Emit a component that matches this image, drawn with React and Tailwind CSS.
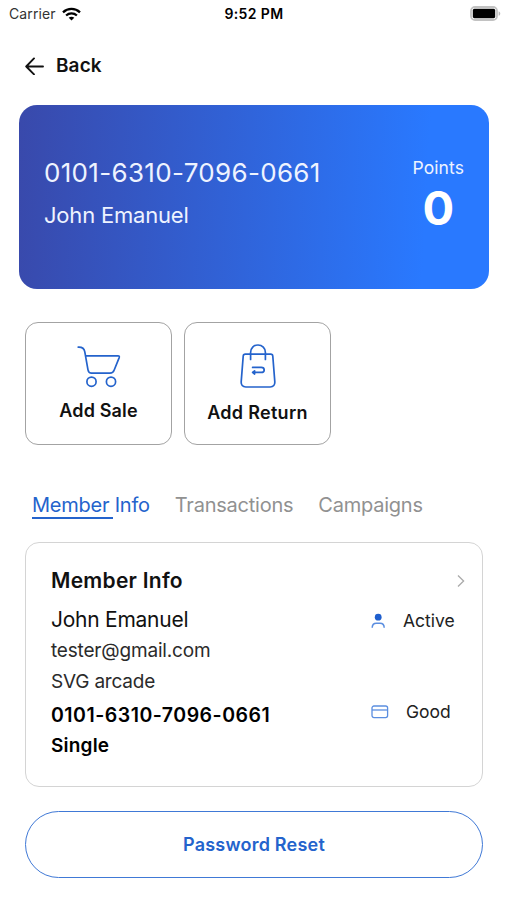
import { useState } from 'react';

const TABS = [
  { id: 'info', label: 'Member Info' },
  { id: 'transactions', label: 'Transactions' },
  { id: 'campaigns', label: 'Campaigns' },
];

const WifiIcon = () => (
  <svg width="19" height="14" viewBox="0 0 19 14" fill="none" stroke="#000" strokeWidth="2.3">
    <path d="M1 5.3C5.8 0.7 13.2 0.7 18 5.3" />
    <path d="M4.1 8.5C7.2 5.6 11.8 5.6 14.9 8.5" />
    <path d="M9.5 13.4L6.7 10.7C8.3 9.3 10.7 9.3 12.3 10.7Z" fill="#000" stroke="none" />
  </svg>
);

const BatteryIcon = () => (
  <svg width="31" height="15" viewBox="0 0 31 15">
    <rect x="1" y="1" width="26" height="13" rx="4" fill="#fff" stroke="#c2c2c2" strokeWidth="1.8" />
    <rect x="2.8" y="2.8" width="22.4" height="9.4" rx="1.6" fill="#000" />
    <path d="M28.6 5.2C30.8 6 30.8 9 28.6 9.8Z" fill="#b9b9b9" />
  </svg>
);

const CartIcon = () => (
  <svg width="44" height="42" viewBox="0 0 44 42" fill="none" stroke="#2463cc" strokeWidth="1.7" strokeLinecap="round" strokeLinejoin="round">
    <path d="M1.2 1.2C5 1 7.2 2.4 7.8 5.8L11 23.8C11.4 26 12.4 27.2 14.6 27.2H33C35.2 27.2 36.4 26.2 37.2 24L42.2 11.6C42.6 10.4 42.2 9.8 41 9.8H8.6" />
    <circle cx="14.5" cy="35.7" r="4.6" />
    <circle cx="34" cy="35.7" r="4.6" />
  </svg>
);

const ReturnBagIcon = () => (
  <svg width="36" height="44" viewBox="0 0 36 44" fill="none" stroke="#2463cc" strokeWidth="1.7" strokeLinecap="round" strokeLinejoin="round">
    <path d="M5.3 10.2H30.7C32 10.2 32.7 10.9 32.8 12.2L34.8 37.6C35 41 33.4 43 30.2 43H5.8C2.6 43 1 41 1.2 37.6L3.2 12.2C3.3 10.9 4 10.2 5.3 10.2Z" />
    <path d="M10.6 15.4V8.4C10.6 4.2 13.8 1 18 1S25.4 4.2 25.4 8.4V15.4" />
    <path d="M12.6 23.4H21.2C23 23.4 24.2 24.4 24.2 25.9S23 28.4 21.2 28.4H13.4" />
    <path d="M14.6 26.8L12.6 28.4L14.6 30Z" fill="#2463cc" />
  </svg>
);

export default function App() {
  const [activeTab, setActiveTab] = useState('info');

  return (
    <div className="h-[900px] w-[507px] overflow-hidden bg-white text-[#111] font-['Inter','Liberation_Sans',sans-serif]">
      {/* Status bar */}
      <div className="grid h-[27px] grid-cols-3 items-center pl-[9px] pr-[6px] text-[14px]">
        <div className="flex items-center gap-[6px] text-[#333]">
          <span className="tracking-[0.1px]">Carrier</span>
          <WifiIcon />
        </div>
        <span className="-ml-[2px] text-center font-semibold tracking-[0.4px] text-black">9:52 PM</span>
        <div className="flex justify-end">
          <BatteryIcon />
        </div>
      </div>

      {/* Header */}
      <button className="mt-[25px] ml-[25px] flex h-7 items-center gap-3 text-[19px] font-semibold tracking-[0.1px]">
        <svg width="19" height="18" viewBox="0 0 19 18" fill="none" stroke="#111" strokeWidth="1.9" strokeLinecap="round" strokeLinejoin="round">
          <path d="M18 9.5H1.2M9 1.4L1.2 9.5L9 17.3" />
        </svg>
        Back
      </button>

      {/* Loyalty card */}
      <div className="mt-[25px] ml-[19px] flex h-[184px] w-[470px] justify-between rounded-[18px] bg-linear-[93deg,#3949ab_0%,#2979ff_86%] pl-[25px] pr-[25px] text-[#eef3ff]">
        <div className="pt-[51px]">
          <p className="text-[26px] leading-[34px] tracking-[0.32px]">0101-6310-7096-0661</p>
          <p className="mt-[9px] text-[22px] leading-[32px] tracking-[-0.2px]">John Emanuel</p>
        </div>
        <div className="pt-[51px] text-center">
          <p className="text-[17.5px] leading-6 tracking-[0.1px]">Points</p>
          <p className="mt-[2px] text-[47px] font-bold leading-[52px] text-white">0</p>
        </div>
      </div>

      {/* Actions */}
      <div className="mt-[33px] ml-[25px] flex gap-3">
        <button className="flex h-[123px] w-[147px] flex-col items-center rounded-[13px] border border-[#a3a3a3] pt-[23px] text-[18px] font-semibold tracking-[0.15px]">
          <CartIcon />
          <span className="mt-[11px] leading-6">Add Sale</span>
        </button>
        <button className="flex h-[123px] w-[147px] flex-col items-center rounded-[13px] border border-[#a3a3a3] pt-[21px] text-[18px] font-semibold tracking-[0.3px]">
          <ReturnBagIcon />
          <span className="mt-[13px] leading-6">Add Return</span>
        </button>
      </div>

      {/* Tabs */}
      <div className="mt-[46px] ml-8 flex h-7 gap-[25px] text-[20px] leading-7 tracking-[-0.23px]">
        {TABS.map(tab => (
          <button
            key={tab.id}
            onClick={() => setActiveTab(tab.id)}
            className={`flex flex-col items-start whitespace-nowrap ${activeTab === tab.id ? 'text-[#2463cc]' : 'text-[#919191]'}`}
          >
            <span className="h-[26px]">{tab.label}</span>
            {activeTab === tab.id && <span className="h-[2px] w-[81px] shrink-0 bg-[#2463cc]" />}
          </button>
        ))}
      </div>

      {/* Member details */}
      <div className="mt-[23px] ml-[25px] flex h-[245px] w-[458px] justify-between rounded-[14px] border border-[#d4d4d4] pl-[25px] pr-[17px]">
        <div className="flex flex-col pt-[23px]">
          <h2 className="text-[21px] font-semibold leading-[30px] tracking-[0.27px]">Member Info</h2>
          <p className="mt-[9px] text-[21px] leading-[30px] tracking-[-0.25px]">John Emanuel</p>
          <p className="mt-px text-[19px] leading-[30px] tracking-[-0.18px] text-[#2b2b2b]">tester@gmail.com</p>
          <p className="text-[19px] leading-[32px] tracking-[-0.2px] text-[#2b2b2b]">SVG arcade</p>
          <p className="mt-[2px] text-[19.5px] font-semibold leading-[30px] tracking-[0.5px] text-black">0101-6310-7096-0661</p>
          <p className="text-[19px] font-semibold leading-[32px] tracking-[0.2px] text-black">Single</p>
        </div>
        <div className="w-[94px] pt-[31px] text-[17.5px] text-[#222]">
          <svg className="ml-auto" width="8" height="14" viewBox="0 0 8 14" fill="none" stroke="#aaa" strokeWidth="1.3">
            <path d="M1 1.5L6.6 7L1 12.5" />
          </svg>
          <div className="mt-[21px] flex h-6 items-center">
            <svg width="15" height="16" viewBox="0 0 15 16" fill="none">
              <circle cx="7.2" cy="4.2" r="3.4" fill="#1f5fce" />
              <path d="M1.2 14.8C1.2 11.8 3 10.2 5.4 10.2H9C11.4 10.2 13.2 11.8 13.2 14.8" stroke="#5b8ee0" strokeWidth="1.5" />
            </svg>
            <span className="ml-[17px]">Active</span>
          </div>
          <div className="mt-[67px] flex h-6 items-center">
            <svg width="18" height="14" viewBox="0 0 18 14" fill="none" stroke="#5b8ee0" strokeWidth="1.3">
              <rect x="1" y="1" width="15.6" height="11.6" rx="2" />
              <path d="M1 5H16.6" />
            </svg>
            <span className="ml-[17px]">Good</span>
          </div>
        </div>
      </div>

      <button className="mt-6 ml-[25px] h-[67px] w-[458px] rounded-full border border-[#4079d6] text-[18px] font-semibold tracking-[0.22px] text-[#2463cc]">
        Password Reset
      </button>
    </div>
  );
}
